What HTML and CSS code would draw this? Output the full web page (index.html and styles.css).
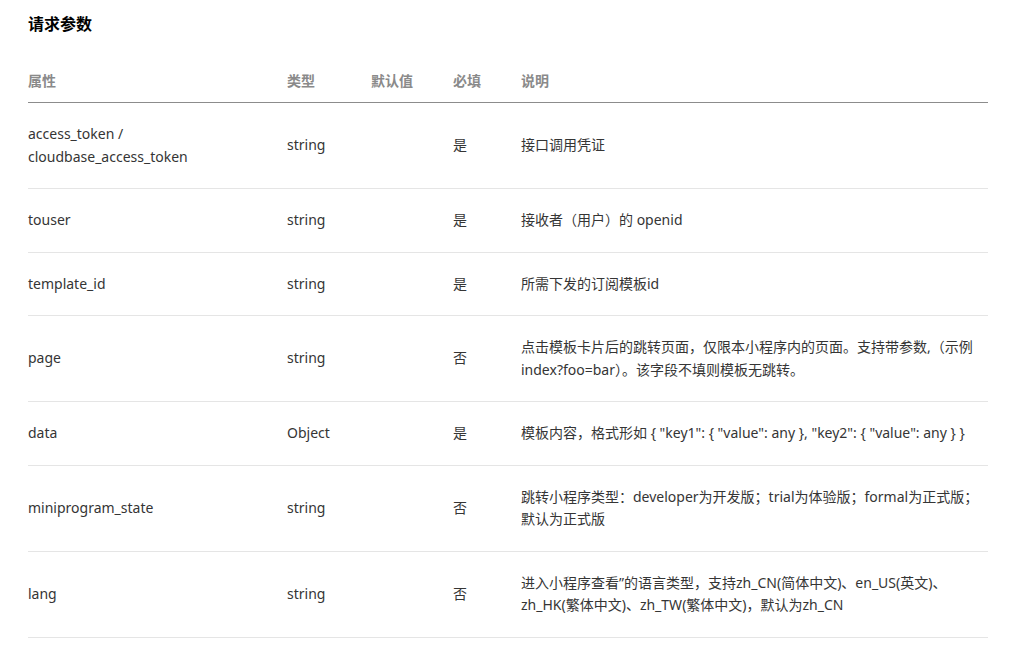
FILE: index.html
```html
<!DOCTYPE html>
<html lang="zh-CN">
<head>
<meta charset="utf-8">
<title>请求参数</title>
<link rel="stylesheet" href="styles.css">
</head>
<body>
<div class="doc">
  <h3 class="title">请求参数</h3>
  <table class="params">
    <colgroup>
      <col class="c-name"><col class="c-type"><col class="c-def"><col class="c-req"><col class="c-desc">
    </colgroup>
    <thead>
      <tr><th>属性</th><th>类型</th><th>默认值</th><th>必填</th><th>说明</th></tr>
    </thead>
    <tbody>
      <tr><td>access_token /<br>cloudbase_access_token</td><td>string</td><td></td><td>是</td><td class="desc">接口调用凭证</td></tr>
      <tr><td>touser</td><td>string</td><td></td><td>是</td><td class="desc">接收者（用户）的 openid</td></tr>
      <tr><td>template_id</td><td>string</td><td></td><td>是</td><td class="desc">所需下发的订阅模板id</td></tr>
      <tr><td>page</td><td>string</td><td></td><td>否</td><td class="desc">点击模板卡片后的跳转页面，仅限本小程序内的页面。支持带参数,（示例index?foo=bar）。该字段不填则模板无跳转。</td></tr>
      <tr><td>data</td><td>Object</td><td></td><td>是</td><td class="desc">模板内容，格式形如 { "key1": { "value": any }, "key2": { "value": any } }</td></tr>
      <tr><td>miniprogram_state</td><td>string</td><td></td><td>否</td><td class="desc">跳转小程序类型：developer为开发版；trial为体验版；formal为正式版；默认为正式版</td></tr>
      <tr><td>lang</td><td>string</td><td></td><td>否</td><td class="desc">进入小程序查看”的语言类型，支持zh_CN(简体中文)、en_US(英文)、zh_HK(繁体中文)、zh_TW(繁体中文)，默认为zh_CN</td></tr>
    </tbody>
  </table>
</div>
</body>
</html>
```
FILE: styles.css
```css
html, body {
  margin: 0;
  padding: 0;
  background: #ffffff;
}
body {
  font-family: "Noto Sans", "Noto Sans CJK SC", sans-serif;
  font-size: 14px;
  color: #353535;
}
.doc {
  width: 960px;
  margin-left: 28px;
  padding-top: 12px;
}
.title {
  margin: 0;
  font-size: 16px;
  line-height: 24px;
  font-weight: 700;
  color: #000;
}
.params {
  margin-top: 22px;
  width: 960px;
  border-collapse: collapse;
  table-layout: fixed;
}
.c-name { width: 259px; }
.c-type { width: 84px; }
.c-def { width: 82px; }
.c-req { width: 68px; }
.params th {
  text-align: left;
  font-weight: 700;
  color: #8a8a8a;
  font-size: 14px;
  line-height: 23px;
  padding: 11px 0 10px;
  border-bottom: 1px solid #8c8c8c;
}
.params td {
  padding: 20px 0;
  line-height: 22.5px;
  vertical-align: middle;
  border-bottom: 1px solid #e5e5e5;
}
.params td.desc {
  padding-right: 0;
}
```
